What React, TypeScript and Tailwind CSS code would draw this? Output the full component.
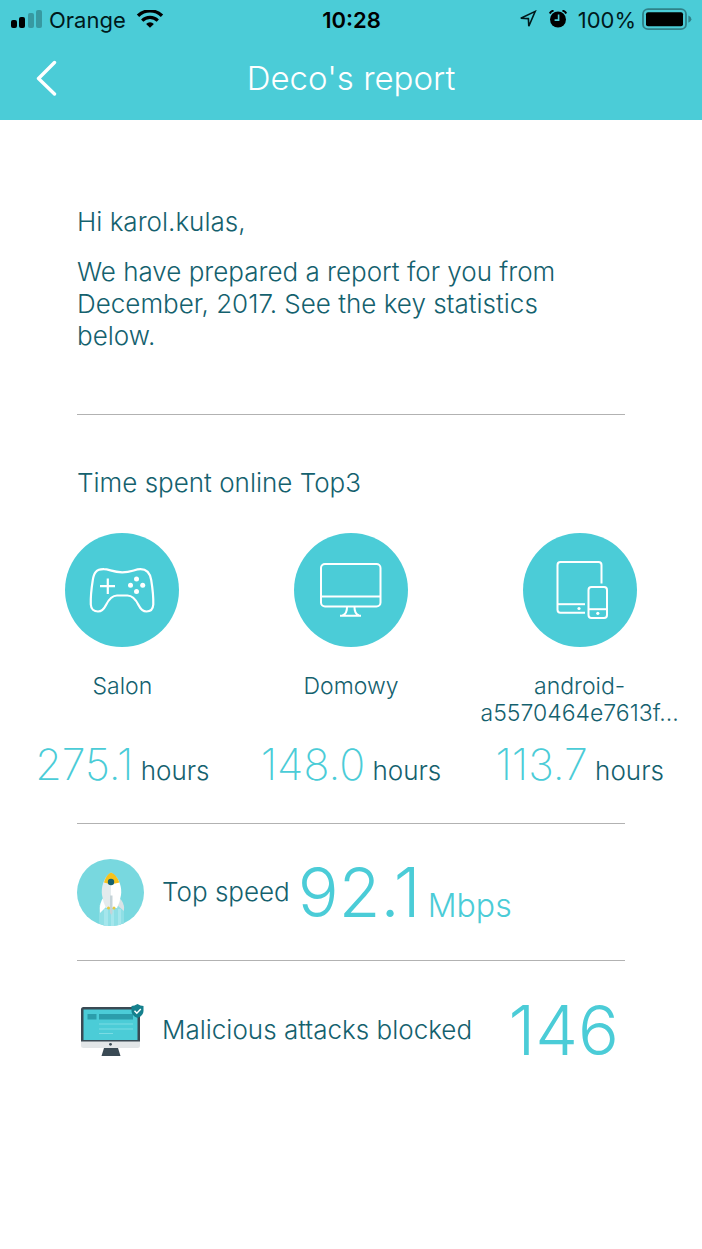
import React from 'react';

interface Device {
  name: string;
  hours: string;
  icon: React.ReactNode;
}

function SignalIcon() {
  return (
    <svg className="h-5 w-8" viewBox="0 0 32 20" aria-hidden="true">
      <rect x="0" y="10" width="6" height="8" rx="2" fill="#000" />
      <rect x="8" y="7" width="6" height="11" rx="2" fill="#000" />
      <rect x="17" y="3" width="6" height="15" rx="2" fill="#3799a1" />
      <rect x="25" y="0" width="6" height="18" rx="2" fill="#3799a1" />
    </svg>
  );
}

function WifiIcon() {
  return (
    <svg className="h-5 w-7" viewBox="0 0 28 20" fill="none" stroke="#000" aria-hidden="true">
      <path d="M2 5.800a17.200 17.200 0 0 1 24 0" strokeWidth="3.4" />
      <path d="M6.200 10.600a11.200 11.200 0 0 1 15.600 0" strokeWidth="3.2" />
      <path d="M14 17.800l-3.900-3.900a5.600 5.600 0 0 1 7.800 0z" fill="#000" stroke="none" />
    </svg>
  );
}

function LocationIcon() {
  return (
    <svg className="h-5 w-5" viewBox="0 0 20 20" fill="none" stroke="#00191b" strokeWidth="1.6" aria-hidden="true">
      <path d="M17.200 1.400L2.800 8.300l7.600.3.400 7.600z" />
    </svg>
  );
}

function AlarmIcon() {
  return (
    <svg className="h-5 w-5" viewBox="0 0 20 20" fill="none" aria-hidden="true">
      <circle cx="10" cy="9.500" r="8" fill="#000" />
      <path d="M1.800 3.500Q2.800 1.100 5.600.6M18.200 3.500Q17.200 1.100 14.400.6" stroke="#000" strokeWidth="2" />
      <path d="M10.600 4.500v5.600H6.600" stroke="#4bccd7" strokeWidth="1.6" />
    </svg>
  );
}

function BatteryIcon() {
  return (
    <svg className="h-6 w-[50px]" viewBox="0 0 50 24" aria-hidden="true">
      <rect x="1" y="1.200" width="43" height="20" rx="5" fill="none" stroke="#2f8189" strokeWidth="1.8" />
      <rect x="4" y="4.200" width="37" height="14" rx="2" fill="#000" />
      <path d="M46.400 7.600q3 1.200 3 3.600t-3 3.600z" fill="#2f8189" />
    </svg>
  );
}

function GamepadIcon() {
  return (
    <svg className="h-[114px] w-[114px]" viewBox="0 0 114 114" fill="none" stroke="#fff" strokeWidth="2.2" aria-hidden="true">
      <path d="M39 36.200C31 36 28.800 40 27.800 47C26.500 55 25.500 64 25.800 71.500C26 76 29 78.500 33 78.500C37 78.500 39 76 41 72C44 66 47 62.500 52 62.500H62.500C67.500 62.500 70.500 66 73.500 72C75.500 76 77.500 78.500 81.500 78.500C85.500 78.500 88 76 88.300 71.500C88.500 64 87.500 55 86.200 47C85 40 82 36.200 75.500 36.200C69.500 36.200 67 39.300 57.200 39.300C47.500 39.300 44.500 36.200 39 36.200Z" />
      <path d="M35 53.200h15M42.800 45.500v15.400" />
      <g fill="#fff" stroke="none">
        <circle cx="71.500" cy="46" r="2.500" />
        <circle cx="65.500" cy="52.200" r="2.500" />
        <circle cx="77.700" cy="52.200" r="2.500" />
        <circle cx="71.500" cy="58.500" r="2.500" />
      </g>
    </svg>
  );
}

function DesktopIcon() {
  return (
    <svg className="h-[114px] w-[114px]" viewBox="0 0 114 114" fill="none" stroke="#fff" strokeWidth="2" aria-hidden="true">
      <rect x="27" y="31" width="59.500" height="42.500" rx="4" />
      <path d="M27 63.500h59.500" />
      <path d="M53 73.500q.3 7-4.500 9M60.500 73.500q-.3 7 4.500 9M46 82.700h21" />
    </svg>
  );
}

function MobileIcon() {
  return (
    <svg className="h-[114px] w-[114px]" viewBox="0 0 114 114" fill="none" stroke="#fff" strokeWidth="2" aria-hidden="true">
      <path d="M62 79.700H37.500q-3 0-3-3V32q0-3 3-3h38q3 0 3 3v18.500" />
      <path d="M34.500 71.200H62" />
      <rect x="65.500" y="54" width="18.500" height="31" rx="3" />
      <path d="M65.500 76.200h18.500" />
      <circle cx="56" cy="75.500" r="1.600" fill="#fff" stroke="none" />
      <circle cx="74.800" cy="80.300" r="1.600" fill="#fff" stroke="none" />
    </svg>
  );
}

function RocketIcon() {
  return (
    <svg className="h-[67px] w-[67px] shrink-0" viewBox="0 0 67 67" aria-hidden="true">
      <circle cx="33.500" cy="33.500" r="33.500" fill="#78d8df" />
      <path d="M22 46h25v18.200q-6 2.800-13 2.800t-12-2.500z" fill="#8fdfe5" />
      <path d="M27 50h4v17h-4zM34 50h3v17h-3zM41 50h3v15.500l-3 .8z" fill="#a5e6ec" />
      <path d="M27 38q-5 5-4 16l7-7z" fill="#fff" />
      <path d="M41 38q7 5 6 14l-7-6z" fill="#d9e3e6" />
      <path d="M34 13.500C26 19 24 29 25 36q1 7 4 13h5z" fill="#e4ebed" />
      <path d="M34 13.500c9 5.500 11 15.500 10 22.500q-1 7-4 13h-6z" fill="#fff" />
      <path d="M27 23.500Q29 16 34 13.500q6 2.500 8.300 10-8 2.500-15.300 0z" fill="#f6c21c" />
      <circle cx="34" cy="23" r="3.200" fill="#14616e" />
      <path d="M33 36.500h2.500V54l-1.200 2-1.300-2z" fill="#c5d3d8" />
      <circle cx="31.500" cy="49" r="1.500" fill="#e5c840" />
      <circle cx="37" cy="49" r="1.500" fill="#e5c840" />
    </svg>
  );
}

function ProtectedDesktopIcon() {
  return (
    <svg className="h-[67px] w-[67px] shrink-0" viewBox="0 0 67 67" aria-hidden="true">
      <rect x="4" y="10" width="59" height="41" rx="2.500" fill="#e2e6e8" />
      <path d="M4 44.500V12.500Q4 10 6.500 10h54Q63 10 63 12.500v32z" fill="#3a4a54" />
      <rect x="6.500" y="12.500" width="54" height="30.500" fill="#4bccd7" />
      <path d="M10.500 17h9v5.500h-9zM22 17h34v5.500H22z" fill="#2b9dab" />
      <path d="M22 27h34M22 32h34M22 36.500h14" stroke="#7adce4" />
      <circle cx="33.500" cy="47.300" r="1.400" fill="#3a4a54" />
      <path d="M27 51h14l2.500 8h-19z" fill="#3a4a54" />
      <path d="M60.500 7q3 2 6 2v5q0 4.500-6 7-6-2.500-6-7v-5q3 0 6-2z" fill="#15808d" />
      <path d="M57.500 13.800l2.300 2.400 4-4.200" fill="none" stroke="#fff" strokeWidth="1.500" />
    </svg>
  );
}

const devices: Device[] = [
  { name: 'Salon', hours: '275.1', icon: <GamepadIcon /> },
  { name: 'Domowy', hours: '148.0', icon: <DesktopIcon /> },
  { name: 'android-a5570464e7613f...', hours: '113.7', icon: <MobileIcon /> },
];

function StatusBar() {
  return (
    <div className="grid h-10 grid-cols-3 items-center pl-[11px] pr-[10px] text-[22px] font-normal text-[#00191b]">
      <div className="flex items-center gap-[6px]">
        <SignalIcon />
        <span>Orange</span>
        <div className="ml-1">
          <WifiIcon />
        </div>
      </div>
      <span className="text-center font-semibold text-black">10:28</span>
      <div className="flex items-center justify-end gap-[6px]">
        <div className="mr-1">
          <LocationIcon />
        </div>
        <AlarmIcon />
        <span className="ml-1">100%</span>
        <BatteryIcon />
      </div>
    </div>
  );
}

function DeviceCard({ device }: { device: Device }) {
  return (
    <li className="flex flex-col items-center">
      <div className="rounded-full bg-[#4bccd7]">{device.icon}</div>
      <p className="mt-[26px] h-[54px] w-full px-3 text-center text-[23px] leading-[27px]">{device.name}</p>
      <p className="mt-[13px] whitespace-nowrap leading-[48px]">
        <span className="text-[43px] font-extralight text-[#4bccd7]">{device.hours}</span>{' '}
        <span className="text-[26px]">hours</span>
      </p>
    </li>
  );
}

export default function App() {
  return (
    <div className="min-h-screen bg-white font-['Inter',sans-serif] text-[26px] font-light leading-8 text-[#14616e]">
      <header className="bg-[#4bccd7] pb-1">
        <StatusBar />
        <nav className="grid h-[76px] grid-cols-[80px_1fr_80px] items-center text-white">
          <button type="button" aria-label="Back" className="flex h-full items-center pl-9">
            <svg className="h-9 w-6" viewBox="0 0 24 36" fill="none" stroke="#fff" strokeWidth="3.400" strokeLinecap="round" strokeLinejoin="round" aria-hidden="true">
              <path d="M18.500 2.500L2.500 18.500 18.500 34" />
            </svg>
          </button>
          <h1 className="text-center text-[33px] leading-10">Deco's report</h1>
        </nav>
      </header>

      <main>
        {/* Greeting */}
        <section className="mx-[77px] border-b border-[#b2b2b2] pb-[62px] pt-[86px]">
          <p>Hi karol.kulas,</p>
          <p className="mt-[18px] pr-12">
            We have prepared a report for you from December, 2017. See the key statistics below.
          </p>
        </section>

        {/* Top devices */}
        <section className="pt-[52px]">
          <h2 className="px-[77px]">Time spent online Top3</h2>
          <ul className="mt-[34px] grid grid-cols-3 px-2">
            {devices.map((device) => (
              <DeviceCard key={device.name} device={device} />
            ))}
          </ul>
        </section>

        {/* Top speed */}
        <section className="mx-[77px] mt-7 flex h-[138px] items-center border-y border-[#b2b2b2]">
          <RocketIcon />
          <h2 className="ml-[18px]">Top speed</h2>
          <p className="ml-2 whitespace-nowrap text-[#4bccd7]">
            <span className="text-[68px] leading-[80px]">92.1</span>{' '}
            <span className="text-[32px] leading-8">Mbps</span>
          </p>
        </section>

        {/* Attacks blocked */}
        <section className="mx-[77px] flex h-[138px] items-center">
          <ProtectedDesktopIcon />
          <h2 className="ml-[18px] whitespace-nowrap">Malicious attacks blocked</h2>
          <p className="ml-auto pr-[6px] text-[68px] leading-[80px] text-[#4bccd7]">146</p>
        </section>
      </main>
    </div>
  );
}
